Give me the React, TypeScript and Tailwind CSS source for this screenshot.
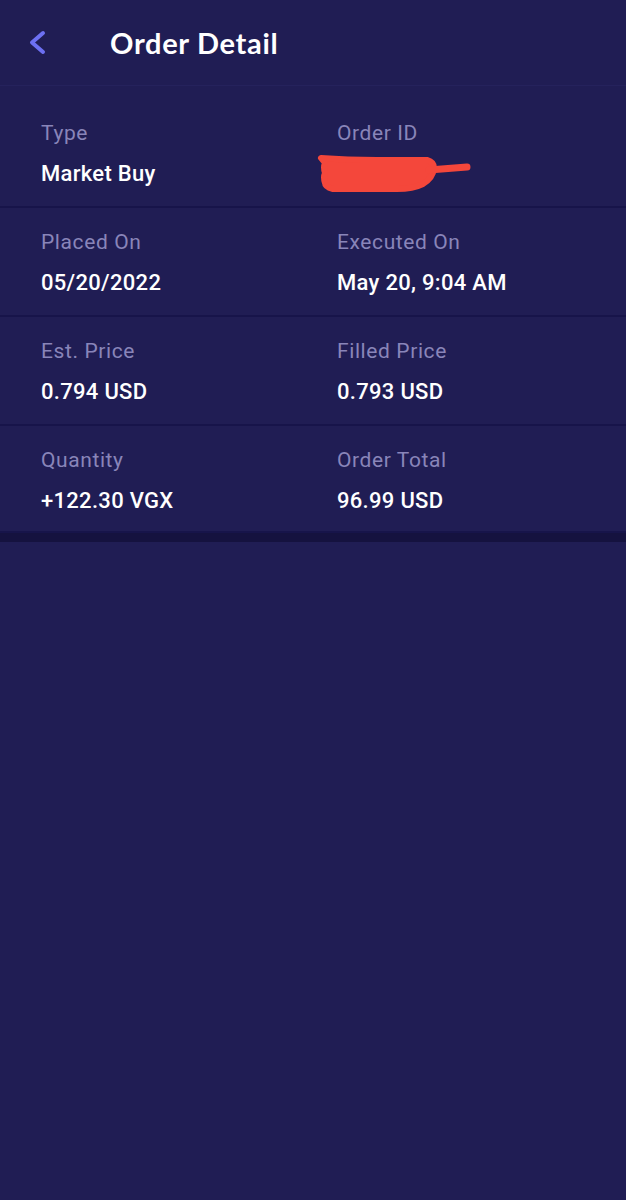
const rows = [
  { a: ["Type", "Market Buy"], b: ["Order ID", ""] },
  { a: ["Placed On", "05/20/2022"], b: ["Executed On", "May 20, 9:04 AM"] },
  { a: ["Est. Price", "0.794 USD"], b: ["Filled Price", "0.793 USD"] },
  { a: ["Quantity", "+122.30 VGX"], b: ["Order Total", "96.99 USD"] },
];

function Scribble() {
  // red marker over the order id
  return (
    <svg width="160" height="42" viewBox="0 0 160 42" className="-ml-[20px]">
      <g fill="#f4473b" stroke="#f4473b" strokeWidth="6" strokeLinejoin="round" strokeLinecap="round">
        <path d="M4 5 Q30 7 60 7 L110 7 Q117 9 117 15 Q116 25 106 31 Q96 36 80 36 L16 36 Q8 34 8 30 Q6 24 8 20 Q6 14 8 10 Z" />
        <path d="M112 17 L150 14" fill="none" strokeWidth="7" />
      </g>
    </svg>
  );
}

export default function App() {
  return (
    <div className="min-h-[1200px] w-full bg-[#201d54] font-['Roboto',sans-serif]">
      <header className="flex h-[86px] items-center border-b border-[#25225c]">
        <svg width="24" height="30" viewBox="0 0 24 30" className="ml-[25px]">
          <path d="M18 5 L7 14.5 L18 24" stroke="#6d70f2" strokeWidth="4" fill="none" strokeLinecap="round" strokeLinejoin="round" />
        </svg>
        <h1 className="ml-[61px] font-['Lato',sans-serif] text-[29px] font-bold tracking-[0.7px] text-white">
          Order Detail
        </h1>
      </header>

      {rows.map((r, i) => (
        <div
          key={i}
          className={`grid grid-cols-[296px_1fr] border-b-2 border-[#17144a] pl-[41px] ${
            i === 0 ? "pt-[34px] pb-[19px]" : i === 3 ? "pt-[21px] pb-[17px]" : "pt-[21px] pb-[19px]"
          }`}
        >
          {[r.a, r.b].map((c, j) => (
            <div key={j} className="flex flex-col">
              <span className="text-[21px] leading-[26px] tracking-[0.6px] text-[#8985b9]">{c[0]}</span>
              {c[1] ? (
                <span className="mt-[15px] text-[22px] font-medium leading-[26px] tracking-[0.3px] text-white">
                  {c[1]}
                </span>
              ) : (
                <div className="mt-[7px] h-[33px]">
                  <Scribble />
                </div>
              )}
            </div>
          ))}
        </div>
      ))}
      <div className="h-[9px] bg-[#15123f]" />
    </div>
  );
}
